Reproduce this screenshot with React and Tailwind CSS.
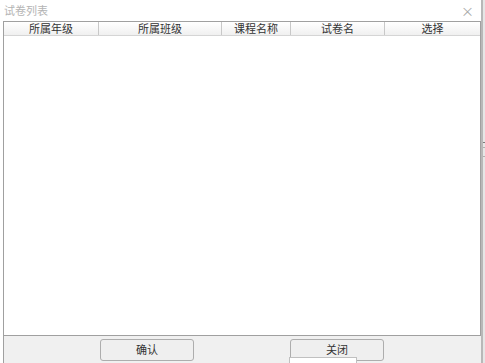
import React from 'react';

const cols = [
  { label: '所属年级', w: 'w-[95px]' },
  { label: '所属班级', w: 'w-[123px]' },
  { label: '课程名称', w: 'w-[69px]' },
  { label: '试卷名', w: 'w-[94px]' },
  { label: '选择', w: 'flex-1' },
];

const App = () => {
  return (
    <div
      className="relative w-[485px] h-[363px] overflow-hidden bg-white text-[12px] text-[#333]"
      style={{ fontFamily: '"Noto Sans CJK SC", "Liberation Sans", sans-serif' }}
    >
      <div className="flex h-full">
        <div className="flex flex-col w-[481px] h-full">
          {/* title */}
          <div className="flex items-center justify-between h-[21px] pl-[4px] pr-[7px]">
            <span className="text-[11px] text-[#b4b4b4] leading-none">试卷列表</span>
            <span className="text-[13px] text-[#a8a8a8] leading-none">×</span>
          </div>

          {/* list */}
          <div className="flex flex-col flex-1 ml-[3px] border border-[#a0a0a0] bg-white">
            <div className="flex h-[14px] border-b border-[#d5d5d5] bg-gradient-to-b from-white to-[#f0f0f0]">
              {cols.map((c, i) => (
                <div
                  key={c.label}
                  className={`${c.w} flex items-center justify-center leading-none text-[11px] ${i < cols.length - 1 ? 'border-r border-[#c8c8c8]' : ''}`}
                >
                  {c.label}
                </div>
              ))}
            </div>
            <div className="flex-1" />
          </div>

          {/* footer */}
          <div className="relative flex items-center h-[27px] ml-[3px] bg-[#f0f0f0] border-l border-[#a0a0a0]">
            <button className="ml-[96px] w-[94px] h-[22px] rounded-[3px] border border-[#adadad] bg-[#efefef] text-[11px] leading-none">
              确认
            </button>
            <button className="ml-[96px] w-[94px] h-[22px] rounded-[3px] border border-[#adadad] bg-[#efefef] text-[11px] leading-none">
              关闭
            </button>
            <div className="absolute left-[285px] top-[21px] w-[68px] h-[10px] bg-white border border-[#c0c0c0]" />
          </div>
        </div>

        {/* right edge of window behind */}
        <div className="flex flex-col w-[4px] h-full bg-[#e6e6e6] border-l-2 border-[#b8b8b8]">
          <div className="h-[142px]" />
          <div className="h-[1px] bg-[#7a7a7a]" />
          <div className="h-[4px]" />
          <div className="h-[1px] bg-[#b0b0b0]" />
          <div className="h-[8px]" />
          <div className="h-[1px] bg-[#b0b0b0]" />
        </div>
      </div>
    </div>
  );
};

export default App;
